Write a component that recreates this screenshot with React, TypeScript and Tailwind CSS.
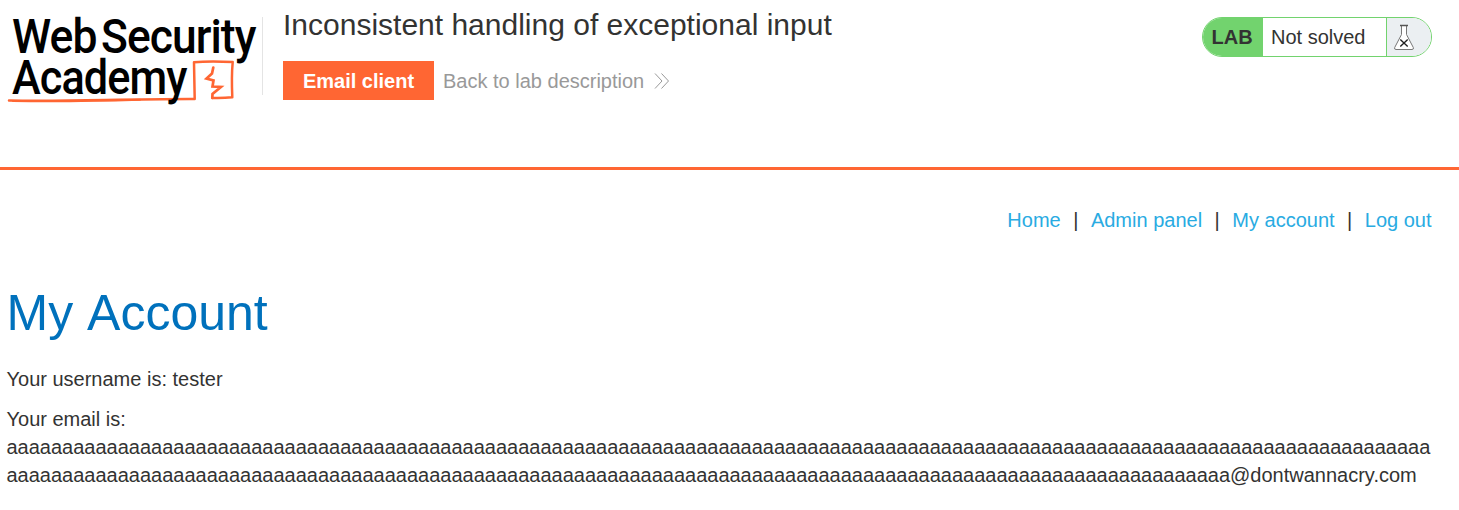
const EMAIL = 'a'.repeat(238) + '@dontwannacry.com';

const NAV = ['Home', 'Admin panel', 'My account', 'Log out'];

function AcademyLogo() {
  return (
    <svg width="262" height="112" viewBox="0 0 262 112" className="block shrink-0 overflow-visible" role="img">
      <g fill="none" stroke="#ff6633" strokeLinejoin="round" strokeLinecap="round">
        <path d="M9 100.500C70 101.800 120 98.800 194.700 99L194 62.300C207 61 220 61.400 232.700 62C231.500 75 231.800 86 232.300 97.300C226 98 219 98.200 212.500 98" strokeWidth="2.500" />
        <path d="M13 101C50 101.600 100 101 140 99.800" strokeWidth="2" />
        <path d="M213.300 67.500L212 73.500L206.500 78.500L213.500 80.500L212.500 86.500L221 87L212.500 94L212.300 98" strokeWidth="2.700" strokeLinejoin="miter" />
      </g>
      <g fill="#000" fontFamily="Roboto, sans-serif" fontWeight="500" fontSize="47.500" letterSpacing="-1">
        <text x="12" y="53" textLength="84.500" lengthAdjust="spacingAndGlyphs">Web</text>
        <text x="101" y="53" textLength="154.500" lengthAdjust="spacingAndGlyphs">Security</text>
        <text x="12" y="94" textLength="174.500" lengthAdjust="spacingAndGlyphs">Academy</text>
      </g>
    </svg>
  );
}

function FlaskIcon() {
  return (
    <svg width="22" height="28" viewBox="0 0 22 28" fill="none" className="block">
      <path d="M8.500 2.500V11.500L1.700 24.500Q1 26.500 3 26.500H19Q21 26.500 20.300 24.500L13.500 11.500V2.500Z" fill="#fff" stroke="#777" strokeWidth="1" />
      <path d="M7 2.500H15" stroke="#555" strokeWidth="1.500" />
      <path d="M7.300 16.500L14.700 23.500M14.700 16.500L7.300 23.500" stroke="#222" strokeWidth="1.400" />
    </svg>
  );
}

export default function App() {
  return (
    <div className="h-[510px] w-full overflow-hidden bg-white font-['Liberation_Sans',Arial,sans-serif] text-[20px] leading-[28px] text-[#333332]">
      <header className="flex h-[170px] items-start border-b-[3px] border-[#ff6633]">
        <AcademyLogo />
        <div className="mt-[17px] h-[78px] w-px shrink-0 bg-[#e4e4e4]" />
        <div className="ml-5 grow pt-[7px]">
          <h2 className="text-[30px] leading-[36px]">Inconsistent handling of exceptional input</h2>
          <div className="mt-[18px] flex items-center">
            <a className="flex h-[39px] w-[151px] items-center justify-center bg-[#ff6633] font-bold text-white">Email client</a>
            <a className="ml-[9px] flex items-center text-[#999]">
              Back to lab description
              <svg width="16" height="16" viewBox="0 0 16 16" fill="none" stroke="#999" className="ml-[10px]">
                <path d="M1 .5L8 8L1 15.500M7.500 .5L14.500 8L7.500 15.500" />
              </svg>
            </a>
          </div>
        </div>
        <div className="mr-[27px] mt-[17px] flex h-10 w-[230px] overflow-hidden rounded-[20px] border border-[#72d36e] bg-white">
          <span className="flex w-[60px] items-center bg-[#72d36e] pl-[8.500px] font-bold [font-kerning:none]">LAB</span>
          <span className="flex w-[123px] items-center pl-[8px]">Not solved</span>
          <span className="flex grow items-center border-l border-[#72d36e] bg-[#ebeff2] pl-[6px]">
            <FlaskIcon />
          </span>
        </div>
      </header>
      <nav className="mt-9 flex justify-end pr-[27.500px]">
        {NAV.map((label, i) => (
          <div key={label} className="flex">
            {i > 0 && <span className="mx-[12.500px]">|</span>}
            <a className="text-[#29abe2]">{label}</a>
          </div>
        ))}
      </nav>
      <main className="pl-[6.500px] pr-[27px]">
        <h1 className="mt-[50px] text-[50px] leading-[58px] text-[#0071bc] [font-kerning:none]">My Account</h1>
        <p className="mt-[23px]">Your username is: tester</p>
        <p className="mt-3 break-words">Your email is: {EMAIL}</p>
      </main>
    </div>
  );
}
